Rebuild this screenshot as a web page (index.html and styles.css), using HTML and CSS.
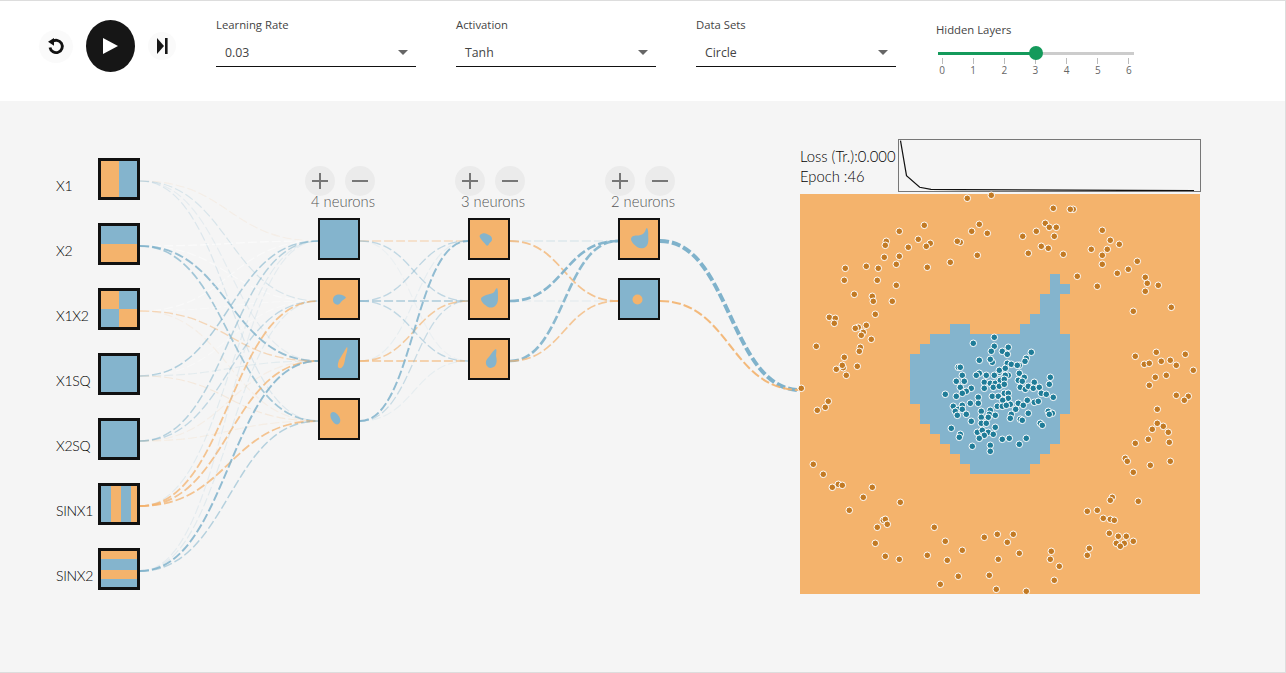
FILE: index.html
```html
<!DOCTYPE html>
<html lang="en">
<head>
<meta charset="utf-8">
<title>Neural network playground</title>
<link rel="stylesheet" href="styles.css">
</head>
<body>
<div class="app">
  <header class="toolbar">
    <div class="transport">
      <button class="btn btn-reset" aria-label="Reset">
        <svg width="18" height="18" viewBox="0 0 18 18"><path d="M5 4.800A6.200 6.200 0 1 1 3 10.500" fill="none" stroke="#111" stroke-width="2.800"/><path d="M1 4.800 7 1v7.800z" fill="#111"/></svg>
      </button>
      <button class="btn btn-play" aria-label="Play">
        <svg width="15" height="16" viewBox="0 0 15 16"><path d="M0 0 15 8 0 16z" fill="#fff"/></svg>
      </button>
      <button class="btn btn-step" aria-label="Step">
        <svg width="11" height="16" viewBox="0 0 11 16"><path d="M0 0 7 8 0 16z" fill="#161616"/><rect x="8" width="2.600" height="16" fill="#161616"/></svg>
      </button>
    </div>
    <div class="field"><label class="field-label">Learning Rate</label><div class="select"><span>0.03</span><i class="caret"></i></div></div>
    <div class="field"><label class="field-label">Activation</label><div class="select"><span>Tanh</span><i class="caret"></i></div></div>
    <div class="field"><label class="field-label">Data Sets</label><div class="select"><span>Circle</span><i class="caret"></i></div></div>
    <div class="slider-field">
      <label class="field-label">Hidden Layers</label>
      <div class="slider">
        <div class="track"><div class="track-on"></div><div class="thumb"></div></div>
        <div class="ticks">
          <span class="tick">0</span><span class="tick">1</span><span class="tick">2</span><span class="tick">3</span><span class="tick">4</span><span class="tick">5</span><span class="tick">6</span>
        </div>
      </div>
    </div>
  </header>

  <main class="stage">
    <svg class="links" id="links" viewBox="0 101 1285 571" width="1285" height="571"></svg>

    <section class="inputs">
      <div class="input-row"><span class="input-label">X1</span><div class="node f-x1"></div></div>
      <div class="input-row"><span class="input-label">X2</span><div class="node f-x2"></div></div>
      <div class="input-row"><span class="input-label">X1X2</span><div class="node f-x1x2"></div></div>
      <div class="input-row"><span class="input-label">X1SQ</span><div class="node f-blue"></div></div>
      <div class="input-row"><span class="input-label">X2SQ</span><div class="node f-blue"></div></div>
      <div class="input-row"><span class="input-label">SINX1</span><div class="node f-sinx1"></div></div>
      <div class="input-row"><span class="input-label">SINX2</span><div class="node f-sinx2"></div></div>
    </section>

    <section class="layer">
      <div class="layer-btns">
        <button class="round" aria-label="Add"><svg width="16" height="16" viewBox="0 0 16 16"><path d="M8 0v16M0 8h16" stroke="#777" stroke-width="2"/></svg></button>
        <button class="round" aria-label="Remove"><svg width="16" height="16" viewBox="0 0 16 16"><path d="M0 8h16" stroke="#777" stroke-width="2"/></svg></button>
      </div>
      <div class="neurons">4 neurons</div>
      <div class="node-stack">
        <div class="node hidden-node f-blue"></div>
        <div class="node hidden-node f-orange"><svg class="blob" viewBox="0 0 42 42"><path class="b" d="M15 22c0-4 3-5.500 6-5.500 3 0 6 1.500 7 3-1 2-4 2.500-5 4.500-1 2-3 3-4.500 2.500C16 26 15 24 15 22z"/></svg></div>
        <div class="node hidden-node f-blue"><svg class="blob" viewBox="0 0 42 42"><path class="o" d="M29 9c1 1 0 5-1 8-1 3-1 6-2 9-1 3-3 5-5 4-2-1-1-5 0-8 2-3 3-5 5-8 1-2 2-4 3-5z"/></svg></div>
        <div class="node hidden-node f-orange"><svg class="blob" viewBox="0 0 42 42"><path class="b" d="M13 15c2-2 4-1 6 1 2 2 4 5 3 8-1 3-4 3-6 1-2-2-5-7-3-10z"/></svg></div>
      </div>
    </section>

    <section class="layer">
      <div class="layer-btns">
        <button class="round" aria-label="Add"><svg width="16" height="16" viewBox="0 0 16 16"><path d="M8 0v16M0 8h16" stroke="#777" stroke-width="2"/></svg></button>
        <button class="round" aria-label="Remove"><svg width="16" height="16" viewBox="0 0 16 16"><path d="M0 8h16" stroke="#777" stroke-width="2"/></svg></button>
      </div>
      <div class="neurons">3 neurons</div>
      <div class="node-stack">
        <div class="node hidden-node f-orange"><svg class="blob" viewBox="0 0 42 42"><path class="b" d="M12 17c2-2 5-2 7-1 2 1 5 2 5 5 0 3-2 3-3 5-1 2-2 2-3 1-1-2-3-3-5-6-1-1-2-3-1-4z"/></svg></div>
        <div class="node hidden-node f-orange"><svg class="blob" viewBox="0 0 42 42"><path class="b" d="M29 10c1 1 1 5 1 8 0 4 0 7-2 9-2 3-6 3-8 2-3-2-7-5-7-8 0-2 3-3 5-4 3-1 5-1 7-2 2-1 2-4 4-5z"/></svg></div>
        <div class="node hidden-node f-orange"><svg class="blob" viewBox="0 0 42 42"><path class="b" d="M28 11c1 1 0 4 0 7 1 4 1 7-1 10-2 2-6 3-8 0-2-3-1-6 1-8 3-3 5-8 8-9z"/></svg></div>
      </div>
    </section>

    <section class="layer">
      <div class="layer-btns">
        <button class="round" aria-label="Add"><svg width="16" height="16" viewBox="0 0 16 16"><path d="M8 0v16M0 8h16" stroke="#777" stroke-width="2"/></svg></button>
        <button class="round" aria-label="Remove"><svg width="16" height="16" viewBox="0 0 16 16"><path d="M0 8h16" stroke="#777" stroke-width="2"/></svg></button>
      </div>
      <div class="neurons">2 neurons</div>
      <div class="node-stack">
        <div class="node hidden-node f-orange"><svg class="blob" viewBox="0 0 42 42"><path class="b" d="M29 10c1 1 1.500 5 1.200 8 .3 4 .3 7-1.200 9.500-2 3-6.500 3.500-9 2-3-2-7-5.500-7-8.500 0-2.500 3-3.500 5.500-3.500 3 0 5-.5 7-2 2-1.500 2-5 3.500-5.500z"/></svg></div>
        <div class="node hidden-node f-blue"><svg class="blob" viewBox="0 0 42 42"><circle class="o" cx="19.500" cy="21.500" r="5"/></svg></div>
      </div>
    </section>

    <section class="output">
      <div class="stats">
        <div class="stats-text"><div>Loss (Tr.):0.000</div><div>Epoch :46</div></div>
        <div class="loss-box">
          <svg width="301" height="51" viewBox="899 140 301 51"><polyline points="900.500,140.700 906.500,175.700 919.700,187.300 931,189.300 958,189.700 1194,190.700" fill="none" stroke="#111" stroke-width="1.200"/></svg>
        </div>
      </div>
      <div class="heatmap">
        <svg class="heat-svg" id="heat" viewBox="800 194 400 400" width="400" height="400">
          <path fill="#84b4cd" d="M1050 274H1060V284H1070V294H1060V334H1070V414H1060V444H1050V454H1040V464H1030V474H970V464H960V454H950V444H940V434H930V424H920V404H910V354H920V344H930V334H950V324H970V334H1020V324H1030V314H1040V294H1050Z"/>
        </svg>
      </div>
    </section>
  </main>
</div>
<script src="script.js"></script>
</body>
</html>
```

FILE: styles.css
```css
* { box-sizing: border-box; }
html, body { margin: 0; padding: 0; height: 100%; }
body { background: #fff; font-family: "Open Sans", "Liberation Sans", sans-serif; overflow: hidden; }

.app {
  width: 1286px;
  height: 673px;
  display: flex;
  flex-direction: column;
  border-top: 1px solid #ddd;
  border-bottom: 1px solid #ddd;
  border-right: 1px solid #ddd;
}

/* toolbar */
.toolbar {
  height: 100px;
  flex: none;
  display: flex;
  align-items: flex-start;
  background: #fff;
  padding-left: 39px;
}
.transport { display: flex; align-items: center; width: 177px; margin-top: 19px; height: 52px; }
.btn { border: 0; padding: 0; display: flex; align-items: center; justify-content: center; border-radius: 50%; }
.btn-reset { width: 34px; height: 33px; background: #fafafa; margin-right: 13px; }
.btn-play { width: 49px; height: 52px; background: #161616; margin-right: 13px; }
.btn-step { width: 28px; height: 28px; background: #fafafa; }

.field { width: 200px; margin-right: 40px; padding-top: 16px; }
.field-label { display: block; font-size: 11.300px; line-height: 16px; color: #444; }
.select {
  margin-top: 7px;
  height: 27px;
  padding: 0 9px 2px;
  display: flex;
  align-items: center;
  justify-content: space-between;
  border-bottom: 1.500px solid #111;
  font-size: 12.300px;
  color: #444;
}
.caret { width: 0; height: 0; border-left: 5px solid transparent; border-right: 5px solid transparent; border-top: 5px solid #666; margin-right: -1px; }

.slider-field { width: 200px; padding-top: 21px; }
.slider { margin-top: 4px; margin-left: 2px; width: 196px; }
.track { position: relative; height: 2.500px; margin-top: 14px; background: #ccc; }
.track-on { width: 98px; height: 100%; background: #149a5b; }
.thumb { position: absolute; left: 91px; top: -6px; width: 14px; height: 14px; border-radius: 50%; background: #149a5b; }
.ticks { display: flex; justify-content: space-between; margin: 3px -1px 0 -2px; }
.tick {
  width: 12px;
  height: 20px;
  padding-top: 6px;
  text-align: center;
  font-size: 10px;
  line-height: 12px;
  color: #666;
  background: linear-gradient(#bbb, #bbb) center top / 1px 6px no-repeat;
}

/* stage */
.stage {
  flex: 1;
  position: relative;
  display: flex;
  align-items: flex-start;
  padding: 38px 0 0 56px;
  background: #f5f5f5;
}
.links { position: absolute; left: 0; top: 0; }

.inputs { position: relative; margin-top: 19px; display: flex; flex-direction: column; gap: 23px; width: 83.500px; }
.input-row { display: flex; justify-content: space-between; height: 42px; }
.input-label { font-family: "Lato", sans-serif; font-weight: 300; font-size: 14px; letter-spacing: -.3px; line-height: 18px; color: #000; margin-top: 19px; }

.node { width: 42px; height: 42px; border: 3px solid #111; flex: none; }
.hidden-node { border-width: 2px; }
.f-blue { background: #84b4cd; }
.f-orange { background: #f4b36c; }
.f-x1 { background: linear-gradient(90deg, #f4b36c 50%, #84b4cd 50%); }
.f-x2 { background: linear-gradient(#84b4cd 50%, #f4b36c 50%); }
.f-x1x2 { background: conic-gradient(#84b4cd 0 25%, #f4b36c 25% 50%, #84b4cd 50% 75%, #f4b36c 75%); }
.f-sinx1 { background: linear-gradient(90deg, #84b4cd 0 28%, #f4b36c 28% 55%, #84b4cd 55% 83%, #f4b36c 83%); }
.f-sinx2 { background: linear-gradient(#f4b36c 0 22%, #84b4cd 22% 52%, #f4b36c 52% 79%, #84b4cd 79%); }
.blob { display: block; width: 42px; height: 42px; margin: -2px; }
.blob .b { fill: #84b4cd; }
.blob .o { fill: #f4b36c; }

.layer { position: relative; width: 100px; margin: 27px 50px 0 0; }
.inputs + .layer { margin-left: 149.500px; }
.layer-btns { display: flex; justify-content: center; gap: 10px; margin-left: 2px; }
.round { width: 30px; height: 30px; padding: 0; border: 0; border-radius: 50%; background: #ebebeb; display: flex; align-items: center; justify-content: center; }
.neurons { font-family: "Lato", sans-serif; font-weight: 300; font-size: 14.800px; line-height: 14px; text-align: center; color: #555; margin-top: -2px; padding-left: 8px; white-space: nowrap; }
.node-stack { display: flex; flex-direction: column; gap: 18px; margin: 10px 0 0 29px; }

.output { position: relative; width: 401px; margin-left: 61px; }
.stats { display: flex; height: 53px; }
.stats-text { width: 98px; padding-top: 7px; font-family: "Lato", sans-serif; font-weight: 300; font-size: 14.800px; line-height: 20px; color: #000; white-space: nowrap; }
.loss-box { width: 303px; height: 53px; border: 1px solid #777; }
.loss-box svg { display: block; }
.heatmap { width: 400px; height: 400px; margin-top: 2px; background: #f4b36c; }
.heat-svg { display: block; overflow: visible; }
.heat-svg circle { stroke: #fff; stroke-width: 1; }
.dot-o { fill: #c27a24; }
.dot-b { fill: #1f7c98; }
```

FILE: script.js
```js
var NS = "http://www.w3.org/2000/svg";
var COL = { b: "#7fb2cb", o: "#f3b26e", w: "#ffffff" };

/* link strengths: colour + opacity; rows = source, cols = target */
function L(x) { return [x[0], parseFloat(x.slice(1))]; }
var inY = [181, 246, 311, 376, 441, 506, 571];
var h1 = [241, 301, 361, 421], h2 = [241, 301, 361], h3 = [241, 301];

var layers = [
  { x0: 140, x1: 318, from: inY, to: h1, w: [
    ["o.10", "b.25", "b.14", "b.22"],
    ["w.5",  "w.4",  "b.80", "b.70"],
    ["w.4",  "w.3",  "o.45", "o.10"],
    ["b.60", "w.3",  "b.15", "o.18"],
    ["b.55", "b.45", "o.10", "o.12"],
    ["b.16", "o.75", "o.75", "o.75"],
    ["b.14", "b.16", "b.85", "b.55"]
  ]},
  { x0: 360, x1: 468, from: h1, to: h2, w: [
    ["o.40", "b.45", "b.08"],
    ["b.45", "b.60", "b.45"],
    ["b.12", "o.65", "o.70"],
    ["b.85", "b.40", "b.12"]
  ]},
  { x0: 510, x1: 618, from: h2, to: h3, w: [
    ["b.30", "o.75"],
    ["b.95", "b.15"],
    ["b.90", "o.70"]
  ]},
  { x0: 660, x1: 800, from: h3, to: [390], w: [["b1.0"], ["o.90"]] }
];

var svg = document.getElementById("links");
layers.forEach(function (l) {
  l.from.forEach(function (y0, i) {
    l.to.forEach(function (y1, j) {
      var s = L(l.w[i][j]);
      var m = (l.x0 + l.x1) / 2;
      var p = document.createElementNS(NS, "path");
      p.setAttribute("d", "M" + l.x0 + " " + y0 + "C" + m + " " + y0 + " " + m + " " + y1 + " " + l.x1 + " " + y1);
      p.setAttribute("fill", "none");
      p.setAttribute("stroke", COL[l.w[i][j][0]]);
      p.setAttribute("stroke-opacity", s[1]);
      var w = 1.1 + s[1] * s[1] * 1.2;
      if (l.x0 === 510 && s[1] > .85) w = 2.6;
      if (l.x0 === 660 && s[1] === 1) w = 4;
      p.setAttribute("stroke-width", w);
      p.setAttribute("stroke-dasharray", "9 3");
      svg.appendChild(p);
    });
  });
});

/* sample points, read off 3x crops: [origin x, origin y, class, [x,y, ...]] */
var groups = [
  [796, 190, "o", [514,25,586,16,385,106,550,103,310,124,527,124,574,130,271,154,268,166,367,148,403,160,391,169,337,172,493,157,484,154,265,202,310,199,544,196,463,217,211,229,148,235,247,235,301,223,394,232,145,271,244,271,301,286,175,313,229,319,232,334,289,334,238,373,100,382,118,385,115,400,187,412,178,415,211,406,202,427,196,436,226,448,61,469,193,472,190,484,145,502,142,533,139,526,121,538,184,529,151,556,16,595]],
  [996, 190, "o", [172,55,232,58,223,58,148,100,160,112,181,112,121,124,80,139,175,139,136,169,157,175,97,190,202,193,319,121,343,151,370,163,286,178,334,178,319,196,319,223,424,214,397,238,364,250,244,259,448,262,454,280,487,286,304,289,448,304,412,364,526,352,418,499,481,487,568,493,445,523,460,520,496,514,523,511,541,526,592,541,478,562,511,556,460,586]],
  [796, 390, "o", [97,34,88,52,64,61,52,223,82,253,109,292,127,283,139,286,229,292,202,322,160,361,313,337,262,391,268,388,274,403,244,412,415,412,238,460,448,454,268,499,310,508,394,496,454,511,499,481,487,559,433,583,565,442,604,433,607,508,580,556,601,598]],
  [996, 390, "o", [541,16,577,19,565,31,484,58,484,100,502,109,469,118,517,127,457,148,418,160,520,157,388,205,394,214,463,226,523,214,412,247,349,322,343,331,427,334,274,364,304,361,322,385,343,388,355,391,340,430,367,439,391,439,361,460,385,460,373,469,412,454,280,475,274,496,52,433,34,457,70,490,166,484,163,508,190,529,175,571,91,604]],
  [890, 260, "b", [313,232,250,250,313,259,355,262,337,274,304,274,352,283,424,277,409,295,405,304,268,301,307,307,301,298,352,310,364,313,388,316,382,316,205,322,211,322,328,337,328,331,346,325,217,346,268,340,259,346,289,346,313,346,355,346,346,346,388,340,403,352,481,352,199,364,223,364,283,367,301,370,316,370,331,361,343,358,385,361,397,364,433,367,478,373,211,382,244,385,229,394,217,400,283,385,310,382,328,379,343,373,391,382,406,388,415,379,430,385,448,382,166,403,199,409,265,412,307,409,325,409,343,400,355,400,454,400,469,403,490,412,355,415,338,421,412,421,433,427,445,424,241,430,265,430,361,433,385,430,322,439,337,439,349,436,400,436,190,439,217,436,205,448,217,448,196,454,377,448,274,454,301,451,475,454,487,460,478,463,415,460,202,466,229,463,298,463,316,466,364,463,274,472,295,472,361,475,391,478,397,481,244,484,274,490,289,490,451,490,457,496,184,505,316,502,262,517,277,511,295,517,211,523,208,532,283,526,310,523,268,535,337,538,358,535,409,535,301,556,247,559,388,553,301,574]]
];

var heat = document.getElementById("heat");
groups.forEach(function (g) {
  var a = g[3];
  for (var i = 0; i < a.length; i += 2) {
    var c = document.createElementNS(NS, "circle");
    c.setAttribute("cx", (g[0] + a[i] / 3).toFixed(1));
    c.setAttribute("cy", (g[1] + a[i + 1] / 3).toFixed(1));
    c.setAttribute("r", 3.3);
    c.setAttribute("class", g[2] === "o" ? "dot-o" : "dot-b");
    heat.appendChild(c);
  }
});
```
